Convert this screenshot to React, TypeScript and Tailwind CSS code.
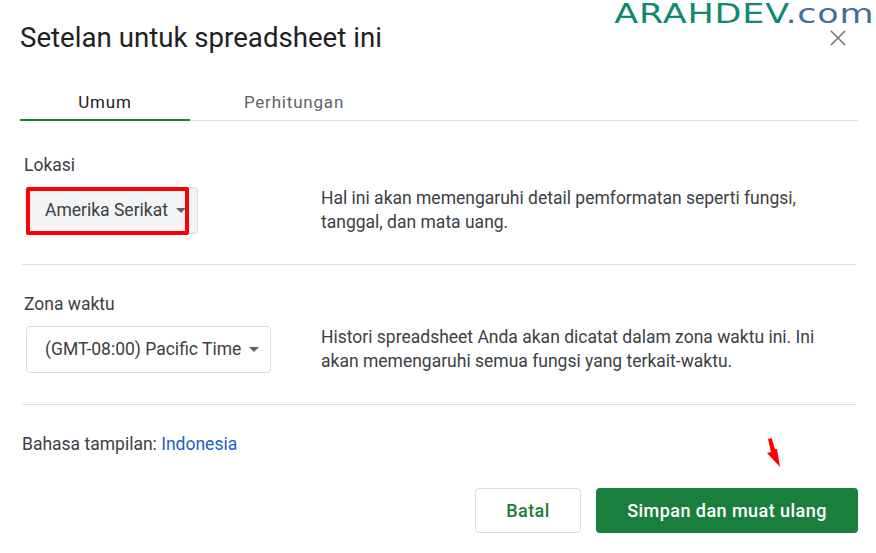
import React from "react";

const Caret = () => (
  <span className="ml-2 h-0 w-0 border-x-[5px] border-t-[5px] border-x-transparent border-t-[#5f6368]" />
);

export default function App() {
  return (
    <div className="relative h-[553px] w-[876px] overflow-hidden bg-white font-['Roboto',sans-serif] text-[#3c4043]">
      {/* watermark */}
      <div className="absolute right-[2px] top-[1px] origin-right scale-x-[1.345] whitespace-nowrap font-['DejaVu_Sans',sans-serif] text-[26px] leading-[26px] tracking-[0.6px]">
        <span className="text-[#0f8a70]">ARAHDEV</span>
        <span className="text-[#3f6f9c]">.com</span>
      </div>

      <div className="flex items-start justify-between pl-5 pr-[30px] pt-[21px]">
        <h1 className="text-[27.65px] font-normal leading-[34px] text-[#202124]">
          Setelan untuk spreadsheet ini
        </h1>
        <svg width="16" height="16" viewBox="0 0 16 16" className="mt-[9px] text-[#70757a]" fill="none" stroke="currentColor" strokeWidth="1.5">
          <path d="M1 1l14 14M15 1L1 15" />
        </svg>
      </div>

      <div className="ml-5 mr-[18px] mt-[21px] flex h-[45px] border-b border-[#e0e0e0] pt-[10px] text-[17px] tracking-[0.8px]">
        <div className="-mb-px flex w-[170px] items-center justify-center border-b-2 border-[#188038] text-[#202124]">Umum</div>
        <div className="ml-[19px] flex w-[170px] items-center justify-center text-[#5f6368]">Perhitungan</div>
      </div>

      <section className="ml-[22px] mr-5 h-[144px] border-b border-[#e0e0e0] pt-[34px]">
        <div className="ml-[2px] text-[17.5px] leading-5">Lokasi</div>
        <div className="mt-3 flex items-start">
          <div className="relative ml-1 flex h-[47px] w-[172px] items-center rounded border border-[#dadce0] bg-[#f1f3f4] pl-[18px] text-[17.5px] text-[#3c4043]">
            Amerika Serikat
            <Caret />
            <div className="absolute -left-[1px] -top-[1px] h-[48px] w-[163px] rounded-[2px] border-[4px] border-[#fe0000]" />
          </div>
          <p className="ml-[123px] mt-[-1px] w-[500px] text-[17.5px] leading-6 text-[#3c4043]">
            Hal ini akan memengaruhi detail pemformatan seperti fungsi, tanggal, dan mata uang.
          </p>
        </div>
      </section>

      <section className="ml-[22px] mr-5 h-[140px] border-b border-[#e0e0e0] pt-[29px]">
        <div className="ml-[2px] text-[17.5px] leading-5">Zona waktu</div>
        <div className="mt-3 flex items-start">
          <div className="ml-1 flex h-[47px] w-[245px] items-center rounded border border-[#dadce0] pl-[18px] text-[17.5px] text-[#3c4043]">
            (GMT-08:00) Pacific Time
            <Caret />
          </div>
          <p className="ml-[50px] mt-[-1px] w-[510px] text-[17.5px] leading-6 text-[#3c4043]">
            Histori spreadsheet Anda akan dicatat dalam zona waktu ini. Ini akan memengaruhi semua fungsi yang terkait-waktu.
          </p>
        </div>
      </section>

      <div className="ml-[22px] mt-[29px] text-[17.5px] leading-5">
        Bahasa tampilan: <span className="text-[#1a5fc8]">Indonesia</span>
      </div>

      <div className="mr-[18px] mt-[34px] flex justify-end gap-[15px] text-[18px] tracking-[0.45px]">
        <button className="h-[45px] w-[106px] rounded border border-[#dadce0] font-medium text-[#188038]">Batal</button>
        <button className="h-[45px] w-[262px] rounded bg-[#1a7f3c] font-medium text-white">Simpan dan muat ulang</button>
      </div>

      {/* red annotation arrow */}
      <svg className="absolute left-[764px] top-[436px]" width="18" height="34" viewBox="0 0 18 34" fill="#fe0000">
        <path d="M4 3L7.5 2L11 13L13 13L16 31L3 17L7 16Z" />
      </svg>
    </div>
  );
}
